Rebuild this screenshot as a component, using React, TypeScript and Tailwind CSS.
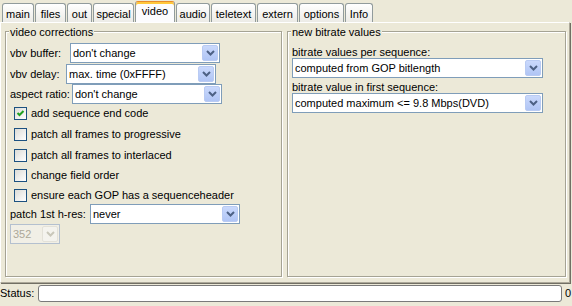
import React from "react";

const tabs = [
  { label: "main", cls: "ml-[2px] w-[32px]" },
  { label: "files", cls: "ml-[1px] w-[31px]" },
  { label: "out", cls: "ml-[1px] w-[25px]" },
  { label: "special", cls: "ml-[1px] w-[41px]" },
  { label: "video", cls: "ml-[1px] w-[40px]", active: true },
  { label: "audio", cls: "ml-[1px] w-[34px]" },
  { label: "teletext", cls: "ml-[1px] w-[45px]" },
  { label: "extern", cls: "ml-[1px] w-[41px]" },
  { label: "options", cls: "ml-[1px] w-[45px]" },
  { label: "Info", cls: "ml-[1px] w-[28px]" },
];

function Chevron({ disabled }: { disabled?: boolean }) {
  return (
    <svg width="9" height="6" viewBox="0 0 9 6">
      <path
        d="M1 1L4.5 4.5L8 1"
        fill="none"
        stroke={disabled ? "#c9c7ba" : "#4d6185"}
        strokeWidth="2"
      />
    </svg>
  );
}

function Combo({ value, className, disabled }: { value: string; className: string; disabled?: boolean }) {
  return (
    <div
      className={`flex items-stretch border p-[1px] ${
        disabled ? "border-[#b4c0cf] bg-[#f1efe6] text-[#aca899]" : "border-[#7f9db9] bg-white"
      } ${className}`}
    >
      <span className="flex-1 truncate pl-[1px] leading-[16px]">{value}</span>
      <span
        className={`flex w-[16px] items-center justify-center rounded-[2px] border ${
          disabled
            ? "border-[#e3e1d8] bg-[#f4f3ee]"
            : "border-[#b9cbf3] bg-linear-to-b from-[#cad9fc] to-[#b0c5f5]"
        }`}
      >
        <Chevron disabled={disabled} />
      </span>
    </div>
  );
}

function Check({ label, checked, className }: { label: string; checked?: boolean; className: string }) {
  return (
    <div className={`flex h-[13px] items-center ${className}`}>
      <span className="ml-[8px] flex h-[13px] w-[13px] items-center justify-center border border-[#1c5180] bg-linear-to-br from-[#dcdcd7] to-white">
        {checked && (
          <svg width="11" height="11" viewBox="0 0 11 11">
            <path d="M2.5 5L4.5 7L8.5 3" fill="none" stroke="#21a121" strokeWidth="2" />
          </svg>
        )}
      </span>
      <span className="ml-[4px] leading-[13px]">{label}</span>
    </div>
  );
}

function Group({ title, className, children }: { title: string; className: string; children: React.ReactNode }) {
  return (
    <div
      className={`relative mt-[8px] h-[246px] border border-[#a5a394] shadow-[1px_1px_0_#fff,inset_1px_1px_0_#fff] ${className}`}
    >
      <span className="absolute -top-[6px] left-[3px] bg-[#ece9d8] px-[1px] leading-[13px]">{title}</span>
      {children}
    </div>
  );
}

export default function App() {
  return (
    <div className="h-[306px] w-[572px] overflow-hidden bg-[#ece9d8] font-['Liberation_Sans',sans-serif] text-[11px] text-black">
      <div className="flex h-[22px] items-end">
        {tabs.map((t) =>
          t.active ? (
            <div
              key={t.label}
              className={`flex h-[21px] justify-center rounded-t-[3px] border-x border-t border-x-[#919b9c] border-t-[#e68b2c] bg-[#fcfcfe] pt-[3px] leading-[13px] shadow-[inset_0_2px_0_#ffc83c] ${t.cls}`}
            >
              {t.label}
            </div>
          ) : (
            <div
              key={t.label}
              className={`flex h-[19px] justify-center rounded-t-[3px] border-x border-t border-[#919b9c] bg-linear-to-b from-white to-[#ecebe6] pt-[4px] leading-[13px] ${t.cls}`}
            >
              {t.label}
            </div>
          )
        )}
      </div>

      <div className="flex h-[261px] w-[570px] border-t border-l border-r border-b border-t-white border-l-white border-r-[#aca899] border-b-[#aca899] pl-[4px] shadow-[1px_1px_0_#716f64]">
        <Group title="video corrections" className="w-[277px]">
          <div className="flex flex-col pl-[4px]">
            <div className="mt-[11px] flex items-center">
              <span className="w-[60px] leading-[13px]">vbv buffer:</span>
              <Combo value="don't change" className="h-[20px] w-[150px]" />
            </div>
            <div className="mt-[1px] flex items-center">
              <span className="w-[56px] leading-[13px]">vbv delay:</span>
              <Combo value="max. time (0xFFFF)" className="h-[20px] w-[150px]" />
            </div>
            <div className="flex items-center">
              <span className="w-[62px] leading-[13px]">aspect ratio:</span>
              <Combo value="don't change" className="h-[20px] w-[150px]" />
            </div>
          </div>
          <Check label="add sequence end code" checked className="mt-[3px]" />
          <Check label="patch all frames to progressive" className="mt-[8px]" />
          <Check label="patch all frames to interlaced" className="mt-[8px]" />
          <Check label="change field order" className="mt-[7px]" />
          <Check label="ensure each GOP has a sequenceheader" className="mt-[7px]" />
          <div className="flex flex-col pl-[4px]">
            <div className="mt-[2px] flex items-center">
              <span className="w-[80px] leading-[13px]">patch 1st h-res:</span>
              <Combo value="never" className="h-[20px] w-[150px]" />
            </div>
            <Combo value="352" disabled className="h-[20px] w-[50px]" />
          </div>
        </Group>

        <Group title="new bitrate values" className="ml-[5px] w-[279px]">
          <div className="flex flex-col pl-[4px]">
            <span className="mt-[14px] leading-[12px]">bitrate values per sequence:</span>
            <Combo value="computed from GOP bitlength" className="h-[20px] w-[251px]" />
            <span className="mt-[3px] leading-[12px]">bitrate value in first sequence:</span>
            <Combo value="computed maximum <= 9.8 Mbps(DVD)" className="h-[20px] w-[251px]" />
          </div>
        </Group>
      </div>

      <div className="mt-[2px] flex h-[17px] items-center">
        <span className="w-[38px] leading-[13px]">Status:</span>
        <div className="h-[17px] w-[524px] rounded-[3px] border border-[#7a7a7a] bg-white" />
        <span className="ml-[3px] leading-[13px]">0</span>
      </div>
    </div>
  );
}
